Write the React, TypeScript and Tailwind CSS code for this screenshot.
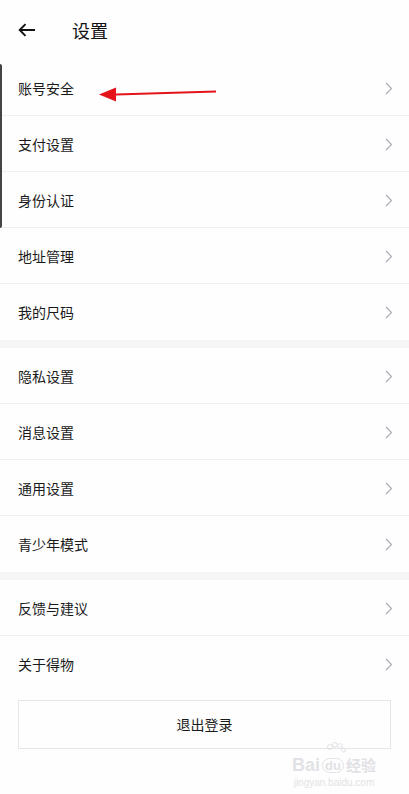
import React from "react";

const groups: string[][] = [
  ["账号安全", "支付设置", "身份认证", "地址管理", "我的尺码"],
  ["隐私设置", "消息设置", "通用设置", "青少年模式"],
  ["反馈与建议", "关于得物"],
];

const Chevron = () => (
  <svg width="8" height="13" viewBox="0 0 8 13" fill="none">
    <path d="M1 1l5.5 5.5L1 12" stroke="#a9a9b6" strokeWidth="1.1" />
  </svg>
);

const Row = ({ title, last }: { title: string; last: boolean }) => (
  <div className="h-[56px] flex items-center justify-between pl-[18px] pr-[16px] relative">
    <span className="text-[14px] text-[#1a1a1a]">{title}</span>
    <Chevron />
    {!last && <div className="absolute left-0 right-0 bottom-0 h-px bg-[#efeff2]" />}
  </div>
);

export default function App() {
  return (
    <div
      className="w-[409px] h-[794px] bg-[#fefefe] relative overflow-hidden"
      style={{ fontFamily: '"Noto Sans CJK SC", "Noto Sans", sans-serif' }}
    >
      {/* header */}
      <div className="h-[60px] flex items-center pl-[18px]">
        <svg width="18" height="14" viewBox="0 0 18 14" fill="none">
          <path d="M17 7H2M7.5 1.2L1.7 7l5.8 5.8" stroke="#111" strokeWidth="1.9" />
        </svg>
        <span className="ml-[36px] text-[18px] text-[#111]">设置</span>
      </div>

      {groups.map((g, gi) => (
        <div key={gi}>
          {gi > 0 && <div className="h-[8px] bg-[#f5f5f8]" />}
          {g.map((t, i) => (
            <Row key={t} title={t} last={i === g.length - 1} />
          ))}
        </div>
      ))}

      <div className="mx-[18px] mt-[8px] h-[49px] border border-[#e6e6ea] flex items-center justify-center">
        <span className="text-[14px] text-[#1a1a1a]">退出登录</span>
      </div>

      {/* left edge bar */}
      <div className="absolute left-0 top-[64px] w-[2px] h-[164px] bg-[#444] rounded-r" />

      {/* red annotation arrow */}
      <svg className="absolute left-[98px] top-[84px]" width="122" height="20" viewBox="0 0 122 20">
        <path d="M18 10.5L118 7.5" stroke="#e5141b" strokeWidth="2.2" />
        <path d="M1 10.5L18 3.5L18 17.5Z" fill="#e5141b" />
      </svg>

      {/* watermark */}
      <div className="absolute left-[292px] top-[742px] flex flex-col items-center text-[#e2e2e6]">
        <svg className="ml-[4px]" width="24" height="14" viewBox="0 0 24 14" fill="none" stroke="#e2e2e6" strokeWidth="1">
          <circle cx="6" cy="5" r="2.5" />
          <circle cx="11" cy="2.8" r="2.3" />
          <circle cx="16" cy="4" r="2.3" />
          <circle cx="19.5" cy="8" r="2" />
        </svg>
        <div className="flex items-center gap-[2px] text-[18px] font-bold leading-none" style={{ fontFamily: '"Liberation Sans", "Noto Sans CJK SC", sans-serif' }}>
          <span>Bai</span>
          <span className="rounded-full border border-[#e2e2e6] px-[2px] text-[13px]">du</span>
          <span className="text-[15px]">经验</span>
        </div>
        <span className="text-[10px] leading-none mt-[4px]" style={{ fontFamily: '"Liberation Sans", sans-serif' }}>
          jingyan.baidu.com
        </span>
      </div>
    </div>
  );
}
